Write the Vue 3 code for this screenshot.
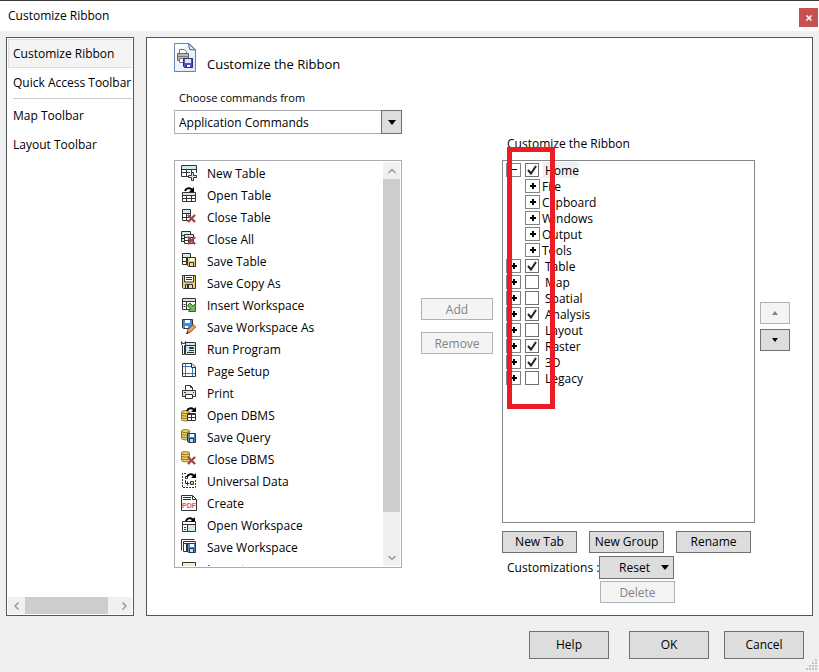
<template>
  <div class="dialog">
    <header class="titlebar">
      <h1 class="titlebar-text">Customize Ribbon</h1>
      <button type="button" class="close" aria-label="Close">
        <svg width="6" height="6" viewBox="0 0 6 6"><path d="M0.5 0.5L5.5 5.5M5.5 0.5L0.5 5.5" stroke="#fff" stroke-width="1.5" /></svg>
      </button>
    </header>

    <div class="body">
      <nav class="sidebar">
        <ul class="pages">
          <li v-for="page in pages" :key="page.name" :class="{ divided: page.divided }">
            <a href="#" class="page" :class="{ selected: page.name === currentPage }" @click.prevent="currentPage = page.name">{{ page.name }}</a>
          </li>
        </ul>
        <div class="hscroll">
          <button type="button" class="scroll-btn" aria-label="Scroll left">
            <svg width="6" height="8" viewBox="0 0 6 8"><path d="M4.5 0.5L1 4L4.5 7.5" /></svg>
          </button>
          <div class="hthumb"></div>
          <button type="button" class="scroll-btn push" aria-label="Scroll right">
            <svg width="6" height="8" viewBox="0 0 6 8"><path d="M1.5 0.5L5 4L1.5 7.5" /></svg>
          </button>
        </div>
      </nav>

      <main class="panel">
        <section class="commands">
          <div class="heading">
            <svg class="heading-icon" width="22" height="29" viewBox="0 0 22 29" v-html="headingIcon"></svg>
            <h2 class="heading-text">Customize the Ribbon</h2>
          </div>
          <label class="choose" for="source">Choose commands from</label>
          <div class="combo">
            <select id="source" v-model="source">
              <option>Application Commands</option>
            </select>
            <span class="combo-arrow">
              <svg width="8" height="5" viewBox="0 0 8 5"><path d="M0 0H8L4 5Z" /></svg>
            </span>
          </div>
          <div class="list">
            <ul class="list-items">
              <li v-for="cmd in commands" :key="cmd.name" class="command">
                <svg width="16" height="16" viewBox="0 0 16 16" fill="none" v-html="cmd.icon"></svg>
                <span class="command-name">{{ cmd.name }}</span>
              </li>
            </ul>
            <div class="vscroll">
              <button type="button" class="scroll-btn" aria-label="Scroll up">
                <svg width="8" height="6" viewBox="0 0 8 6"><path d="M0.5 5L4 1.5L7.5 5" /></svg>
              </button>
              <div class="vtrack"><div class="vthumb"></div></div>
              <button type="button" class="scroll-btn" aria-label="Scroll down">
                <svg width="8" height="6" viewBox="0 0 8 6"><path d="M0.5 1L4 4.5L7.5 1" /></svg>
              </button>
            </div>
          </div>
        </section>

        <div class="transfer">
          <button type="button" class="btn" disabled>Add</button>
          <button type="button" class="btn" disabled>Remove</button>
        </div>

        <section class="ribbon">
          <h3 class="ribbon-title">Customize the Ribbon</h3>
          <div class="tree-area">
            <ul class="tree">
              <li v-for="tab in tabs" :key="tab.name">
                <div class="node">
                  <button type="button" class="expander" :aria-label="'Toggle ' + tab.name" @click="tab.open = !tab.open">
                    <svg width="8" height="8" viewBox="0 0 8 8"><path :d="tab.open ? minus : plus" /></svg>
                  </button>
                  <label class="tab-label">
                    <span class="check">
                      <input v-model="tab.checked" type="checkbox">
                      <svg v-if="tab.checked" width="10" height="10" viewBox="0 0 10 10"><path d="M1 5L4 8.5L9 1" /></svg>
                    </span>
                    <span class="tab-name" :class="{ current: tab.name === 'Home' }">{{ tab.name }}</span>
                  </label>
                </div>
                <ul v-if="tab.open" class="groups">
                  <li v-for="group in tab.groups" :key="group" class="node">
                    <button type="button" class="expander" :aria-label="'Expand ' + group">
                      <svg width="8" height="8" viewBox="0 0 8 8"><path :d="plus" /></svg>
                    </button>
                    <span class="group-name">{{ group }}</span>
                  </li>
                </ul>
              </li>
            </ul>
            <div class="marker"></div>
          </div>
          <div class="edit-buttons">
            <button type="button" class="btn">New Tab</button>
            <button type="button" class="btn">New Group</button>
            <button type="button" class="btn">Rename</button>
          </div>
          <div class="custom">
            <span class="custom-label">Customizations :</span>
            <div class="custom-buttons">
              <button type="button" class="btn reset">
                <span>Reset</span>
                <svg width="8" height="5" viewBox="0 0 8 5"><path d="M0 0H8L4 5Z" /></svg>
              </button>
              <button type="button" class="btn delete" disabled>Delete</button>
            </div>
          </div>
        </section>

        <div class="order">
          <button type="button" class="btn" disabled aria-label="Move up">
            <svg width="6" height="4" viewBox="0 0 6 4"><path d="M0 4H6L3 0Z" /></svg>
          </button>
          <button type="button" class="btn" aria-label="Move down">
            <svg width="6" height="4" viewBox="0 0 6 4"><path d="M0 0H6L3 4Z" /></svg>
          </button>
        </div>
      </main>
    </div>

    <footer class="footer">
      <button type="button" class="btn help">Help</button>
      <button type="button" class="btn">OK</button>
      <button type="button" class="btn">Cancel</button>
    </footer>
    <svg class="grip" width="11" height="11" viewBox="0 0 11 11">
      <path d="M9 0h2v2h-2zM6 3h2v2h-2zM9 3h2v2h-2zM3 6h2v2h-2zM6 6h2v2h-2zM9 6h2v2h-2zM0 9h2v2h-2zM3 9h2v2h-2zM6 9h2v2h-2zM9 9h2v2h-2z" />
    </svg>
  </div>
</template>

<script setup>
import { ref } from 'vue';

const ink = '#333';
const sky = '#cdeaf3';
const gold = '#f0d264';
const blue = '#3b8fe0';

const plus = 'M3 1H5V3H7V5H5V7H3V5H1V3H3Z';
const minus = 'M1 3H7V4H1Z';

// Reusable pieces of the 16x16 glyphs
const redX = (x, y) =>
  `<path d="M${x + 1} ${y + 1}l7 7M${x + 8} ${y + 1}l-7 7" stroke="#777" stroke-width="2.4"/>` +
  `<path d="M${x + 1} ${y + 1}l7 7M${x + 8} ${y + 1}l-7 7" stroke="#b83a3a" stroke-width="1.5"/>`;

const floppy = (x, y, fill) =>
  `<path d="M${x + 0.5} ${y + 0.5}h8v9h-7l-1 -1z" fill="${fill}" stroke="${ink}"/>` +
  `<path d="M${x + 3} ${y + 1}h4v3h-4z" fill="#fff"/>` +
  `<path d="M${x + 3} ${y + 6}h4v3h-4z" fill="#ddd"/><path d="M${x + 2.5} ${y + 9}v-3.5h4v3.5" stroke="${ink}"/>`;

const cylinder =
  `<path d="M0.5 2C0.5 0.2 8.5 0.2 8.5 2V9.5C8.5 11.3 0.5 11.3 0.5 9.5Z" fill="${gold}" stroke="#8f7424"/>` +
  '<path d="M0.5 2.5C1.5 4 7.5 4 8.5 2.5M0.5 5C1.5 6.5 7.5 6.5 8.5 5M0.5 7.5C1.5 9 7.5 9 8.5 7.5" stroke="#8f7424"/>';

const arrow = (x) =>
  `<path d="M${x} 4C${x + 1} 1 ${x + 4} 0.5 ${x + 7} 2.5" stroke="#000" stroke-width="2"/><path d="M${x + 9} 0V5H${x + 4}Z" fill="#000"/>`;

const smallTable =
  `<path d="M1.5 0.5h8v11h-8z" fill="#fff" stroke="${ink}"/><path d="M2 1h7v3h-7z" fill="${sky}"/>` +
  `<path d="M1 4.5h9M1 8.5h9M5.5 4v8" stroke="${ink}"/>`;

const icons = {
  newTable:
    `<path d="M0.5 0.5h15v11h-15z" fill="#fff"/><path d="M1 1h14v3h-14z" fill="${sky}"/>` +
    `<path d="M15.5 8V0.5H0.5V11.5H8M0 4.5h16M0 7.5h9M5.5 4v8M10.5 4v4" stroke="${ink}"/>` +
    `<path d="M10.5 7.5h2v3h3v2h-3v3h-2v-3h-3v-2h3z" fill="${sky}" stroke="${ink}"/>`,
  openTable:
    `<path d="M1.5 5.5h13v9h-13z" fill="#fff" stroke="${ink}"/><path d="M2 6h12v2h-12z" fill="${sky}"/>` +
    `<path d="M1 8.5h14M1 11.5h14M5.5 8v7M10.5 8v7" stroke="${ink}"/>${arrow(4)}`,
  closeTable: smallTable + redX(6, 5),
  closeAll:
    `<path d="M0.5 0.5h9v10h-9z" fill="${sky}" stroke="${ink}"/><path d="M0 4.5h4M0 7.5h4" stroke="${ink}"/>` +
    `<path d="M3.5 3.5h9v9h-9z" fill="#fff" stroke="${ink}"/><path d="M4 4h8v2h-8z" fill="${sky}"/>` +
    `<path d="M3 6.5h10M3 9.5h10M7.5 6v7" stroke="${ink}"/>${redX(6, 5)}`,
  saveTable: smallTable + floppy(6, 4, gold),
  saveCopy:
    `<path d="M1.5 0.5h13v13h-12l-1 -1z" fill="${gold}" stroke="${ink}"/>` +
    `<path d="M3.5 1v6h9v-6" fill="#fff" stroke="${ink}"/><path d="M5 2.5h6M5 4.5h6" stroke="${ink}"/>` +
    `<path d="M4.5 9.5h7v4h-7z" fill="#ddd" stroke="${ink}"/><path d="M6 10h2v3h-2z" fill="${ink}"/>`,
  insertWorkspace:
    `<path d="M1.5 1.5h13v11h-13z" fill="#fff" stroke="${ink}"/><path d="M1 4.5h14M5.5 4v9" stroke="${ink}"/>` +
    `<path d="M2 2h12v2h-12z" fill="${sky}"/><path d="M2.5 7.5h2M2.5 9.5h2" stroke="${ink}"/>` +
    '<path d="M9 6L12 9L14.5 6.5V14.5H7.5L9.5 12L6.5 8.5Z" fill="#6fb955" stroke="#2f6b26"/>',
  saveWorkspaceAs:
    `<path d="M1.5 0.5h10v9h-9l-1 -1z" fill="${blue}" stroke="${ink}"/><path d="M4 1h5v3h-5z" fill="#fff"/>` +
    '<path d="M4 7h3v2h-3z" fill="#fff"/><path d="M6 14.5L7 10.5L12 5.5L14.5 8L9.5 13Z" fill="#f0a35a" stroke="#704020"/><path d="M5 15l1 -2l1.5 1.5z" fill="#222"/>',
  runProgram:
    `<path d="M4.5 1.5h10v12h-10z" fill="${sky}" stroke="${ink}"/><path d="M5 4.5h9M8 9.5h5M6 11.5h7" stroke="${ink}"/>` +
    `<path d="M8.5 6.5h4v1h-4z" fill="#fff" stroke="${ink}"/>` +
    `<path d="M0.5 0.5V3.5L1.5 4.5V13.5H3.5V4.5L4.5 3.5V0.5L3.5 2.5H1.5Z" fill="#fff" stroke="${ink}"/>`,
  pageSetup:
    `<path d="M1.5 0.5H11L14.5 4V13.5H1.5Z" fill="#fff" stroke="${ink}"/><path d="M10.5 0.5V4.5H14.5" fill="${sky}" stroke="${ink}"/>` +
    '<path d="M4.5 1v12M11.5 5v8M2 3.5h8M2 10.5h12" stroke="#3579bd"/>',
  print:
    `<path d="M4.5 6V0.5H9.5L11.5 2.5V6" fill="#fff" stroke="${ink}"/><path d="M9.5 0.5v2h2" stroke="${ink}"/>` +
    `<path d="M1.5 5.5h13v6h-13z" fill="${sky}" stroke="${ink}"/><path d="M4.5 9.5h7v4h-7z" fill="#fff" stroke="${ink}"/><path d="M3 7.5h2M12 7.5h1" stroke="${ink}"/>`,
  openDbms:
    `<g transform="translate(0 3)">${cylinder}</g><path d="M6.5 6.5h8v7h-8z" fill="#fff" stroke="${ink}"/>` +
    `<path d="M6 7.5h9M6 10.5h9M10.5 7v7" stroke="${ink}"/>${arrow(6)}`,
  saveQuery: cylinder + floppy(6, 4, blue),
  closeDbms: cylinder + redX(6, 5),
  universal:
    `<path d="M5 0.5H1.5V14.5H14.5V7" stroke="${ink}" stroke-dasharray="2 1"/>` +
    `<path d="M4.5 3.5h2v2h-2z" stroke="${ink}"/><path d="M4.5 7v3.5h4M6.5 8.5v4" stroke="${ink}"/>` +
    `<path d="M9.5 8.5h3v3h-3z" fill="${gold}" stroke="${ink}"/>${arrow(6)}`,
  pdf:
    `<path d="M0.5 15.5V0.5H11.5L15.5 4.5V15.5Z" fill="#fff" stroke="${ink}"/><path d="M11.5 0.5v4h4M2 2.5h8M2 4.5h8" stroke="${ink}"/>` +
    '<path d="M1 6h14v8h-14z" fill="#fff"/><text x="8" y="13" text-anchor="middle" font-family="Liberation Sans, sans-serif" font-size="7" font-weight="bold" fill="#f05050">PDF</text>',
  openWorkspace:
    `<path d="M1.5 4.5h13v10h-13z" fill="#fff" stroke="${ink}"/><path d="M7 8h7v6h-7z" fill="${sky}"/>` +
    `<path d="M1 7.5h14M6.5 7v8M3 10.5h2M3 12.5h2" stroke="${ink}"/>${arrow(5)}`,
  saveWorkspace:
    `<path d="M0.5 11.5V0.5H13.5" stroke="${ink}"/><path d="M2.5 2.5h12v10h-12z" fill="#fff" stroke="${ink}"/><path d="M2 4.5h13M5.5 4v9" stroke="${ink}"/>${floppy(6, 4, blue)}`,
  importFile: `<path d="M1.5 1.5h13v13h-13z" fill="#f9eeb8" stroke="${ink}"/>`,
};

const headingIcon =
  '<defs><linearGradient id="sheet" x2="1" y2="1"><stop stop-color="#fff"/><stop offset="1" stop-color="#dce9f6"/></linearGradient></defs>' +
  '<path d="M0.5 0.5H15L21.5 7V28.5H0.5Z" fill="url(#sheet)" stroke="#6585ab"/>' +
  '<path d="M14.5 0.5L15.5 6.5L21.5 7Z" fill="#d8ecfa" stroke="#45678f"/>' +
  '<path d="M5.5 11V6.5H10.5L12.5 8.5V11" fill="#fff" stroke="#777"/>' +
  '<path d="M3.5 10.5H14.5V17.5H3.5Z" fill="#bbb" stroke="#666"/><path d="M4 13.5H14" stroke="#777"/>' +
  '<path d="M5.5 15.5H12.5V19.5H5.5Z" fill="#fff" stroke="#777"/>' +
  '<path d="M9.5 15.5H18.5V24.5H10.5L9.5 23.5Z" fill="#4a52c4" stroke="#262d80"/>' +
  '<path d="M11 16H17V20H11Z" fill="#dfe4ff"/><path d="M12 22H16V24H12Z" fill="#fff"/><path d="M12 22H13V24H12Z" fill="#262d80"/>';

const pages = [
  { name: 'Customize Ribbon' },
  { name: 'Quick Access Toolbar' },
  { name: 'Map Toolbar', divided: true },
  { name: 'Layout Toolbar' },
];
const currentPage = ref('Customize Ribbon');
const source = ref('Application Commands');

const commands = [
  { name: 'New Table', icon: icons.newTable },
  { name: 'Open Table', icon: icons.openTable },
  { name: 'Close Table', icon: icons.closeTable },
  { name: 'Close All', icon: icons.closeAll },
  { name: 'Save Table', icon: icons.saveTable },
  { name: 'Save Copy As', icon: icons.saveCopy },
  { name: 'Insert Workspace', icon: icons.insertWorkspace },
  { name: 'Save Workspace As', icon: icons.saveWorkspaceAs },
  { name: 'Run Program', icon: icons.runProgram },
  { name: 'Page Setup', icon: icons.pageSetup },
  { name: 'Print', icon: icons.print },
  { name: 'Open DBMS', icon: icons.openDbms },
  { name: 'Save Query', icon: icons.saveQuery },
  { name: 'Close DBMS', icon: icons.closeDbms },
  { name: 'Universal Data', icon: icons.universal },
  { name: 'Create', icon: icons.pdf },
  { name: 'Open Workspace', icon: icons.openWorkspace },
  { name: 'Save Workspace', icon: icons.saveWorkspace },
  { name: 'Import', icon: icons.importFile },
];

const tabs = ref([
  { name: 'Home', checked: true, open: true, groups: ['File', 'Clipboard', 'Windows', 'Output', 'Tools'] },
  { name: 'Table', checked: true, open: false },
  { name: 'Map', checked: false, open: false },
  { name: 'Spatial', checked: false, open: false },
  { name: 'Analysis', checked: true, open: false },
  { name: 'Layout', checked: false, open: false },
  { name: 'Raster', checked: true, open: false },
  { name: '3D', checked: true, open: false },
  { name: 'Legacy', checked: false, open: false },
]);
</script>

<style>
body {
  margin: 0;
}
</style>

<style scoped>
.dialog {
  position: relative;
  display: flex;
  flex-direction: column;
  box-sizing: border-box;
  height: 100vh;
  border-top: 1px solid #3a3a3a;
  background: #f0f0f0;
  color: #000;
  font: 12px/16px "Open Sans", "Noto Sans", sans-serif;
}

.dialog * {
  box-sizing: border-box;
}

ul {
  margin: 0;
  padding: 0;
  list-style: none;
}

h1,
h2,
h3 {
  margin: 0;
  font-size: 12px;
  font-weight: 400;
}

button,
select {
  font: inherit;
  color: inherit;
  padding: 0;
}

svg {
  display: block;
  flex: none;
}

.titlebar {
  display: flex;
  justify-content: space-between;
  align-items: center;
  height: 30px;
  padding-left: 8px;
  background: #fff;
}

.close {
  display: grid;
  place-items: center;
  width: 19px;
  height: 19px;
  margin: 3px 1px 0 0;
  border: 0;
  background: #c75050;
}

.body {
  flex: 1;
  min-height: 0;
  display: flex;
  gap: 12px;
  padding: 6px 6px 0;
}

.sidebar {
  display: flex;
  flex-direction: column;
  justify-content: space-between;
  flex: none;
  width: 128px;
  padding: 1px;
  border: 1px solid #555;
  background: #fff;
}

.page {
  display: block;
  height: 29px;
  padding-left: 4px;
  border: 1px solid transparent;
  line-height: 27px;
  color: inherit;
  text-decoration: none;
  white-space: nowrap;
}

.page.selected {
  border-color: #ddd;
  border-right: 0;
  background: #f4f4f4;
}

.divided::before {
  content: "";
  display: block;
  height: 1px;
  margin: 1px 0 2px 5px;
  background: #ccc;
}

.hscroll {
  display: flex;
  height: 17px;
  background: #f0f0f0;
}

.hthumb {
  width: 67%;
  background: #cdcdcd;
}

.push {
  margin-left: auto;
}

.scroll-btn {
  display: grid;
  place-items: center;
  width: 17px;
  height: 17px;
  border: 0;
  background: #f0f0f0;
}

.scroll-btn path {
  fill: none;
  stroke: #999;
  stroke-width: 1.5;
}

.panel {
  flex: 1;
  min-width: 0;
  display: flex;
  padding: 5px 22px 0 27px;
  border: 1px solid #555;
  background: #fff;
}

.commands {
  display: flex;
  flex-direction: column;
  flex: none;
  width: 228px;
  padding-bottom: 47px;
}

.heading {
  display: flex;
  gap: 11px;
  height: 30px;
}

.heading-text {
  padding-top: 13px;
  font-size: 13px;
}

.choose {
  margin: 17px 0 4px 5px;
  font-size: 11px;
}

.combo {
  display: grid;
  height: 24px;
  margin-bottom: 26px;
}

.combo select,
.combo-arrow {
  grid-area: 1 / 1;
}

.combo select {
  appearance: none;
  width: 100%;
  padding: 2px 0 0 4px;
  border: 1px solid #abadb3;
  border-radius: 0;
  background: #fff;
}

.combo-arrow {
  display: grid;
  place-items: center;
  justify-self: end;
  width: 21px;
  border: 1px solid #707070;
  background: #ddd;
  pointer-events: none;
}

.list {
  flex: 1;
  min-height: 0;
  display: flex;
  padding: 1px;
  border: 1px solid #abadb3;
}

.list-items {
  flex: 1;
  overflow: hidden;
}

.command {
  display: flex;
  align-items: center;
  gap: 10px;
  height: 22px;
  padding-left: 5px;
  white-space: nowrap;
}

.command-name {
  padding-top: 2px;
}

.vscroll {
  display: flex;
  flex-direction: column;
  width: 17px;
  background: #f0f0f0;
}

.vtrack {
  flex: 1;
}

.vthumb {
  height: 90%;
  background: #cdcdcd;
}

.btn {
  display: flex;
  justify-content: center;
  align-items: center;
  height: 22px;
  border: 1px solid #707070;
  background: #ddd;
  white-space: nowrap;
}

.btn:disabled {
  border-color: #adb2b5;
  background: #f4f4f4;
  color: #838383;
}

.btn path {
  fill: currentColor;
}

.transfer {
  display: flex;
  flex-direction: column;
  gap: 12px;
  flex: none;
  width: 72px;
  margin: 255px 9px 0 19px;
}

.transfer .btn {
  padding-top: 2px;
}

.ribbon {
  flex: 1;
  min-width: 0;
  display: flex;
  flex-direction: column;
  padding: 93px 0 12px;
}

.ribbon-title {
  margin-left: 5px;
  line-height: 16px;
}

.tree-area {
  position: relative;
  flex: 1;
  min-height: 0;
  margin: 8px 0;
}

.tree {
  height: 100%;
  padding: 1px 3px;
  border: 1px solid #828790;
}

/* red frame drawn over the expanders and check boxes */
.marker {
  position: absolute;
  top: -13px;
  left: 5px;
  width: 48px;
  height: 262px;
  border: 5px solid #ed1c24;
  pointer-events: none;
}

.node,
.tab-label {
  display: flex;
  align-items: center;
  height: 16px;
}

.expander {
  display: grid;
  place-items: center;
  width: 15px;
  height: 14px;
  border: 1px solid #828282;
  background: #fff;
}

.tab-label {
  margin-left: 4px;
  gap: 4px;
}

.check {
  display: grid;
  place-items: center;
}

.check input,
.check svg {
  grid-area: 1 / 1;
}

.check input {
  appearance: none;
  width: 14px;
  height: 14px;
  margin: 0;
  border: 1px solid #707070;
  background: #fff;
}

.check path {
  fill: none;
  stroke: #212121;
  stroke-width: 2;
}

.check svg {
  pointer-events: none;
}

.tab-name,
.group-name {
  height: 16px;
  padding-left: 2px;
  line-height: 18px;
}

.tab-name.current {
  background: #f0f0f0;
}

.groups {
  padding-left: 19px;
}

.edit-buttons {
  display: flex;
  gap: 12px;
}

.edit-buttons .btn,
.custom .btn {
  width: 75px;
}

.custom {
  display: flex;
  margin-top: 3px;
  padding-left: 5px;
}

.custom-label {
  width: 92px;
  padding-top: 4px;
  white-space: nowrap;
}

.custom-buttons {
  display: flex;
  flex-direction: column;
  gap: 2px;
}

.custom .reset {
  justify-content: flex-end;
  gap: 11px;
  height: 23px;
  padding-right: 4px;
}

.custom .delete {
  margin-left: 1px;
  padding-top: 2px;
}

.order {
  display: flex;
  flex-direction: column;
  gap: 5px;
  flex: none;
  width: 30px;
  margin: 259px 0 0 5px;
}

.footer {
  display: flex;
  justify-content: flex-end;
  gap: 15px;
  padding: 15px 15px 13px;
}

.footer .btn {
  width: 80px;
  height: 28px;
}

.footer .help {
  margin-right: 5px;
}

.grip {
  position: absolute;
  right: 2px;
  bottom: 2px;
  fill: #c0c4d4;
}
</style>
